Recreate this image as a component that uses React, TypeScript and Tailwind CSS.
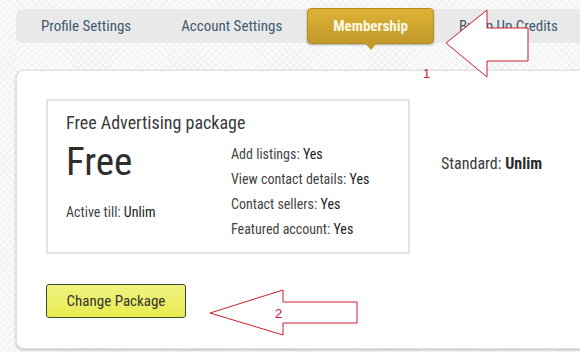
import React from 'react';

const tabs = ['Profile Settings', 'Account Settings', 'Membership', 'Bump Up Credits'];

const features = [
  ['Add listings', 'Yes'],
  ['View contact details', 'Yes'],
  ['Contact sellers', 'Yes'],
  ['Featured account', 'Yes'],
];

const Arrows: React.FC = () => (
  <svg className="absolute inset-0 pointer-events-none" width="580" height="352" viewBox="0 0 580 352">
    <polygon
      points="446,43 487,10 487,28 528,28 528,61 487,61 487,77"
      fill="#fff"
      stroke="#c8202c"
      strokeWidth="1"
    />
    <text x="423" y="78" fill="#c8202c" fontSize="13" fontFamily="Liberation Sans, sans-serif">1</text>
    <polygon
      points="210,313 283,290 283,302 357,302 357,323 283,323 283,335"
      fill="#fff"
      stroke="#c8202c"
      strokeWidth="1"
    />
    <text x="275" y="318" fill="#c8202c" fontSize="13" fontFamily="Liberation Sans, sans-serif">2</text>
  </svg>
);

export default function App() {
  return (
    <div className="relative w-[580px] h-[352px] overflow-hidden bg-[#fafafa] bg-[repeating-linear-gradient(45deg,#f1f1f1_0_1px,transparent_1px_5px),repeating-linear-gradient(-45deg,#f1f1f1_0_1px,transparent_1px_5px)] font-['Roboto_Condensed',Roboto,sans-serif]">
      <div className="pl-4 pt-[9px]">
        <div className="flex h-[34px] w-[600px] bg-[#e9e9e9] rounded-l-[6px]">
          {tabs.map((t) =>
            t === 'Membership' ? (
              <div key={t} className="relative -mt-px h-[36px] px-[25px] flex items-center rounded-[4px] border border-[#b38d22] bg-gradient-to-b from-[#ddb235] to-[#c29a2b] text-[15px] font-bold text-[#fff8e4] shadow-[0_1px_2px_rgba(0,0,0,0.3)]">
                {t}
                <span className="absolute left-1/2 -translate-x-1/2 top-full w-0 h-0 border-x-[6px] border-x-transparent border-t-[7px] border-t-[#c29a2b]" />
              </div>
            ) : (
              <div key={t} className="px-[25px] flex items-center text-[15px] text-[#3f5a6f]">
                {t}
              </div>
            )
          )}
        </div>
      </div>

      <div className="ml-4 mt-[27px] w-[600px] h-[279px] bg-white rounded-[8px] border border-[#e2e2e2] shadow-[0_1px_3px_rgba(0,0,0,0.25)] pl-[29px] pt-[28px]">
        <div className="flex gap-[31px]">
          <div className="w-[364px] h-[155px] border-2 border-[#e3e3e3] pl-[18px] pt-[9px] text-[#333]">
            <div className="text-[18px] leading-[26px] text-[#3a3a3a]">Free Advertising package</div>
            <div className="flex mt-[2px]">
              <div className="w-[165px]">
                <div className="text-[39px] leading-[48px] text-[#2e2e2e]">Free</div>
                <div className="mt-[16px] text-[14px] text-[#444]">
                  Active till: <span className="text-[#222]">Unlim</span>
                </div>
              </div>
              <div className="flex flex-col text-[14px] leading-[25px] pt-[4px] text-[#444]">
                {features.map(([k, v]) => (
                  <div key={k}>
                    {k}: <span className="text-[#222]">{v}</span>
                  </div>
                ))}
              </div>
            </div>
          </div>
          <div className="mt-[53px] text-[16px] text-[#3a3a3a]">
            Standard: <span className="font-bold text-[#2a2a2a]">Unlim</span>
          </div>
        </div>
        <button className="mt-[30px] w-[140px] h-[34px] rounded-[3px] border border-[#3d4a36] bg-gradient-to-b from-[#f0f27e] to-[#e8ec4e] text-[15px] text-[#333]">
          Change Package
        </button>
      </div>

      <Arrows />
    </div>
  );
}
